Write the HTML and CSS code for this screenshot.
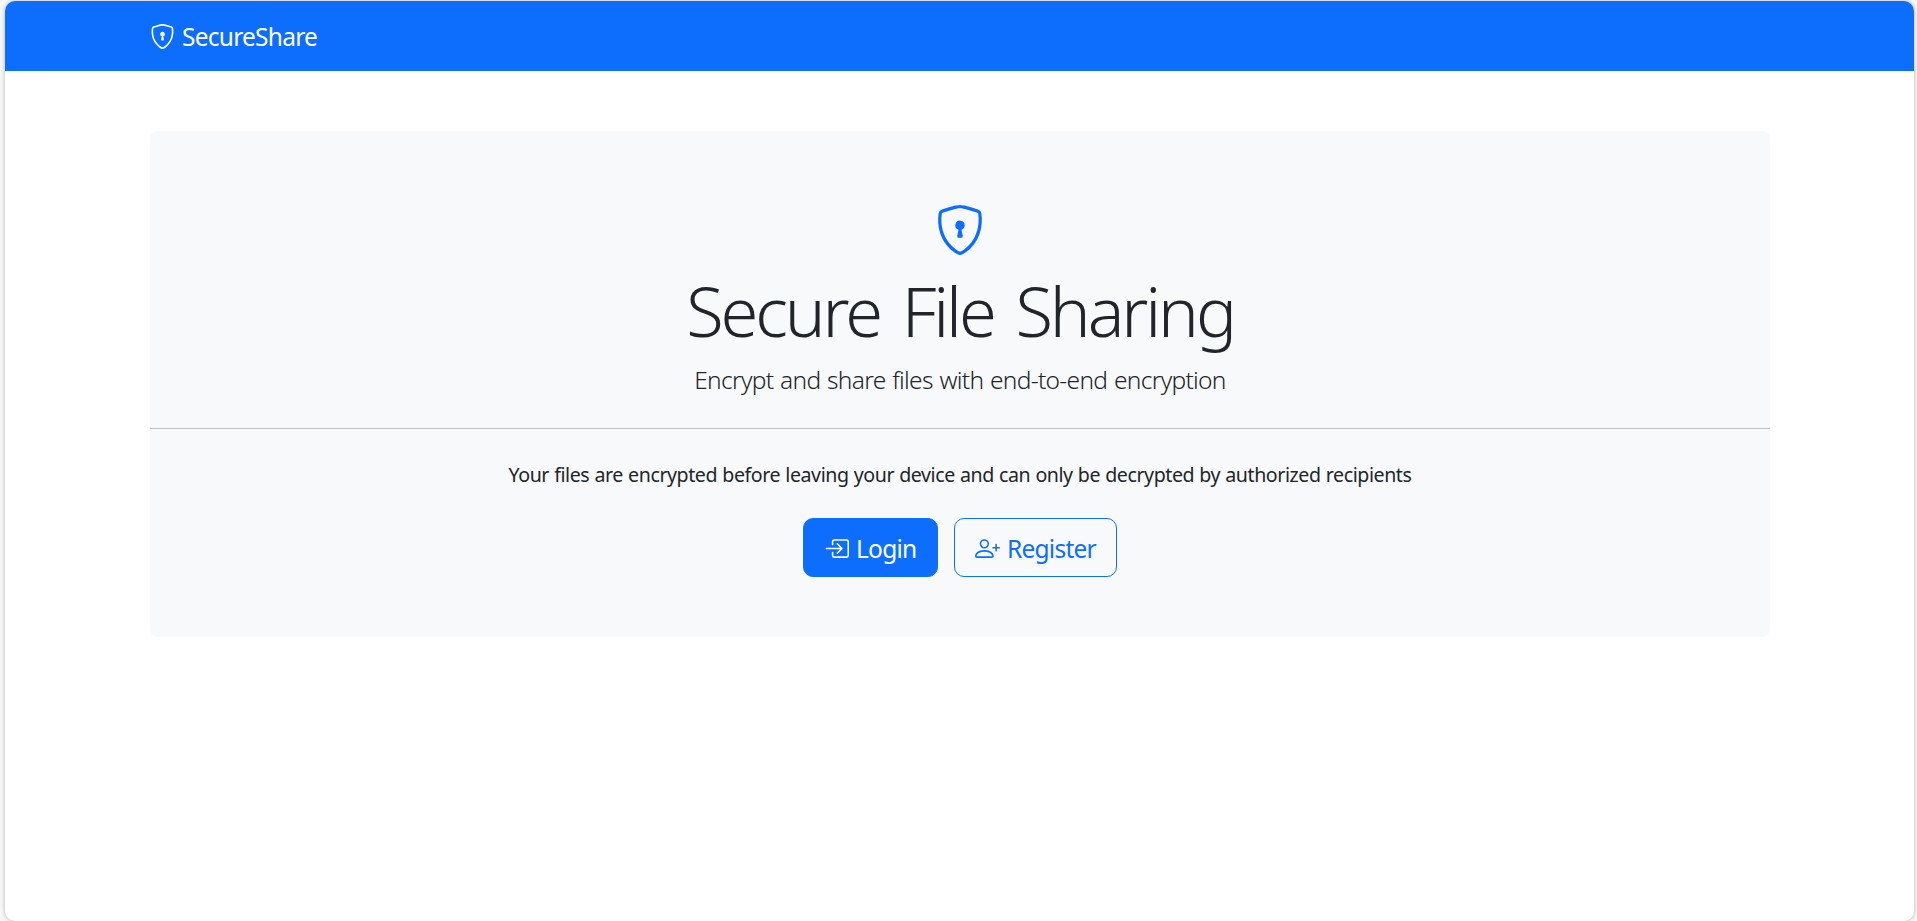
FILE: index.html
```html
<!DOCTYPE html>
<html lang="en">
<head>
<meta charset="utf-8">
<title>SecureShare</title>
<link rel="stylesheet" href="styles.css">
</head>
<body>
<svg class="sprite" aria-hidden="true">
  <symbol id="shield-lock" viewBox="0 0 16 16">
    <path d="M5.338 1.59a61 61 0 0 0-2.837.856.48.48 0 0 0-.328.39c-.554 4.157.726 7.19 2.253 9.188a10.7 10.7 0 0 0 2.287 2.233c.346.244.652.42.893.533q.18.085.293.118a1 1 0 0 0 .101.025 1 1 0 0 0 .1-.025q.114-.034.294-.118c.24-.113.547-.29.893-.533a10.7 10.7 0 0 0 2.287-2.233c1.527-1.997 2.807-5.031 2.253-9.188a.48.48 0 0 0-.328-.39c-.651-.213-1.75-.56-2.837-.855C9.552 1.29 8.531 1.067 8 1.067c-.53 0-1.552.223-2.662.524zM5.072.56C6.157.265 7.31 0 8 0s1.843.265 2.928.56c1.11.3 2.229.655 2.887.87a1.54 1.54 0 0 1 1.044 1.262c.596 4.477-.787 7.795-2.465 9.99a11.8 11.8 0 0 1-2.517 2.453 7 7 0 0 1-1.048.625c-.28.132-.581.24-.829.24s-.548-.108-.829-.24a7 7 0 0 1-1.048-.625 11.8 11.8 0 0 1-2.517-2.453C1.928 10.487.545 7.169 1.141 2.692A1.54 1.54 0 0 1 2.185 1.43 63 63 0 0 1 5.072.56"/>
    <path d="M9.5 6.5a1.5 1.5 0 0 1-1 1.415l.385 1.99a.5.5 0 0 1-.491.595h-.788a.5.5 0 0 1-.49-.595l.384-1.99a1.5 1.5 0 1 1 2-1.415"/>
  </symbol>
  <symbol id="arrow-in" viewBox="0 0 16 16">
    <path d="M6 3.5a.5.5 0 0 1 .5-.5h8a.5.5 0 0 1 .5.5v9a.5.5 0 0 1-.5.5h-8a.5.5 0 0 1-.5-.5v-2a.5.5 0 0 0-1 0v2A1.5 1.5 0 0 0 6.5 14h8a1.5 1.5 0 0 0 1.5-1.5v-9A1.5 1.5 0 0 0 14.5 2h-8A1.5 1.5 0 0 0 5 3.5v2a.5.5 0 0 0 1 0z"/>
    <path d="M11.854 8.354a.5.5 0 0 0 0-.708l-3-3a.5.5 0 1 0-.708.708L10.293 7.5H1.5a.5.5 0 0 0 0 1h8.793l-2.147 2.146a.5.5 0 0 0 .708.708z"/>
  </symbol>
  <symbol id="person-plus" viewBox="0 0 16 16">
    <path d="M6 8a3 3 0 1 0 0-6 3 3 0 0 0 0 6m2-3a2 2 0 1 1-4 0 2 2 0 0 1 4 0m4 8c0 1-1 1-1 1H1s-1 0-1-1 1-4 6-4 6 3 6 4m-1-.004c-.001-.246-.154-.986-.832-1.664C9.516 10.68 8.289 10 6 10s-3.516.68-4.168 1.332c-.678.678-.83 1.418-.832 1.664z"/>
    <path d="M13.5 5a.5.5 0 0 1 .5.5V7h1.5a.5.5 0 0 1 0 1H14v1.5a.5.5 0 0 1-1 0V8h-1.5a.5.5 0 0 1 0-1H13V5.5a.5.5 0 0 1 .5-.5"/>
  </symbol>
</svg>
<div class="page">
  <nav class="navbar">
    <a class="brand"><svg class="icon"><use href="#shield-lock"/></svg><span>SecureShare</span></a>
  </nav>
  <main class="hero">
    <svg class="hero-icon"><use href="#shield-lock"/></svg>
    <h1 class="title">Secure File Sharing</h1>
    <p class="lead">Encrypt and share files with end-to-end encryption</p>
    <hr class="divider">
    <p class="note">Your files are encrypted before leaving your device and can only be decrypted by authorized recipients</p>
    <div class="actions">
      <a class="btn btn-primary"><svg class="icon"><use href="#arrow-in"/></svg><span>Login</span></a>
      <a class="btn btn-outline"><svg class="icon"><use href="#person-plus"/></svg><span>Register</span></a>
    </div>
  </main>
</div>
</body>
</html>
```
FILE: styles.css
```css
* { box-sizing: border-box; }
body {
  margin: 0;
  height: 921px;
  padding: 1px 3px 0 5px;
  overflow: hidden;
  background: #f7f7f7;
  color: #212529;
  font-family: "Noto Sans", "Open Sans", sans-serif;
}
.sprite { display: none; }
.page {
  height: 920px;
  background: #fff;
  border-radius: 10px;
  overflow: hidden;
  box-shadow: 0 0 4px rgba(0, 0, 0, 0.28);
}
.navbar {
  display: flex;
  align-items: center;
  height: 70px;
  padding-left: 145px;
  background: #0d6efd;
  color: #fff;
}
.icon { width: 25px; height: 25px; fill: currentColor; flex: none; }
.brand {
  display: flex;
  align-items: center;
  gap: 7px;
  font-size: 24.5px;
  letter-spacing: -0.75px;
}
.hero {
  display: flex;
  flex-direction: column;
  align-items: center;
  width: 1620px;
  height: 506px;
  margin: 60px 0 0 145px;
  padding-top: 74px;
  border-radius: 7.5px;
  background: #f8f9fa;
}
.hero-icon { width: 50px; height: 50px; flex: none; fill: #0d6efd; }
.title {
  margin: 14px 0 8px;
  font-size: 68.6px;
  line-height: 84px;
  font-weight: 300;
  letter-spacing: -3.1px;
  word-spacing: 7px;
  white-space: nowrap;
}
.lead {
  margin: 0;
  font-size: 24.5px;
  line-height: 37px;
  font-weight: 300;
  letter-spacing: -0.69px;
  word-spacing: 1px;
}
.divider {
  width: 100%;
  height: 1px;
  margin: 30px 0;
  border: 0;
  background: #c0c2c3;
}
.note {
  margin: 0 0 29px;
  font-size: 19.6px;
  line-height: 31px;
  letter-spacing: -0.43px;
  word-spacing: 0.5px;
}
.actions { display: flex; gap: 16px; margin-top: -1px; }
.btn {
  display: flex;
  align-items: center;
  height: 59px;
  padding: 2px 0 0 20px;
  border: 1px solid #0d6efd;
  border-radius: 10px;
  font-size: 24.5px;
  letter-spacing: -0.75px;
  gap: 7px;
}
.btn-primary { width: 135px; background: #0d6efd; color: #fff; }
.btn-outline { width: 163px; color: #0d6efd; }
```
